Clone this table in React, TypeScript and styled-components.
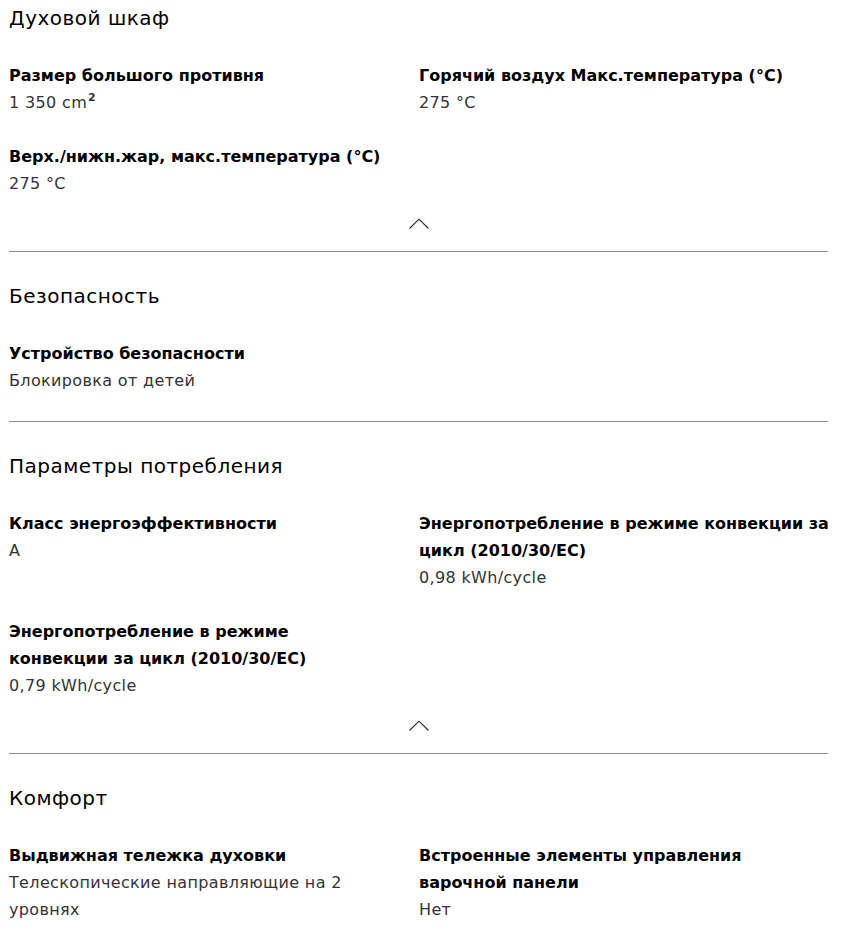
import React from "react";
import styled, { createGlobalStyle } from "styled-components";

const Global = createGlobalStyle`
  html, body { margin: 0; padding: 0; background: #fff; }
  body { font-family: "DejaVu Sans", "Liberation Sans", sans-serif; color: #000; }
`;

const Page = styled.div`
  padding: 3px 15px 0 9px;
`;

const Section = styled.section<{ $last?: boolean; $first?: boolean }>`
  border-bottom: ${(p) => (p.$last ? "none" : "1px solid #8c8c8c")};
  padding-top: ${(p) => (p.$first ? 0 : 29)}px;
`;

const Heading = styled.h2`
  margin: 0;
  font-size: 20px;
  line-height: 30px;
  font-weight: 400;
  letter-spacing: 0.5px;
  color: #000;
`;

const Grid = styled.div<{ $pad: boolean }>`
  display: grid;
  grid-template-columns: 410px 1fr;
  row-gap: 27px;
  margin-right: -6px;
  padding-top: 29px;
  padding-bottom: ${(p) => (p.$pad ? 27 : 0)}px;
`;

const Item = styled.div<{ $col: number }>`
  padding-right: ${(p) => (p.$col === 0 ? 28 : 0)}px;
`;

const Label = styled.div`
  font-size: 16px;
  line-height: 27px;
  font-weight: 700;
  color: #000;
`;

const Value = styled.div`
  font-size: 16px;
  line-height: 27px;
  letter-spacing: 0.35px;
  color: #333;
`;

const Sup = styled.sup`
  font-size: 11px;
  font-weight: 700;
  line-height: 0;
  vertical-align: 7px;
  margin-left: 1px;
`;

const ToggleRow = styled.div`
  height: 54px;
  display: flex;
  justify-content: center;
  align-items: flex-start;
`;

const Toggle = styled.button`
  border: 0;
  background: none;
  padding: 0;
  margin-top: 21px;
  width: 20px;
  height: 11px;
  cursor: pointer;
  display: flex;
  color: #222;
`;

type Entry = { label: string; value: React.ReactNode };
type Sec = { title: string; items: Entry[]; toggle?: boolean };

const sections: Sec[] = [
  {
    title: "Духовой шкаф",
    toggle: true,
    items: [
      {
        label: "Размер большого противня",
        value: (
          <>
            1 350 cm<Sup>2</Sup>
          </>
        ),
      },
      { label: "Горячий воздух Макс.температура (°C)", value: "275 °C" },
      { label: "Верх./нижн.жар, макс.температура (°C)", value: "275 °C" },
    ],
  },
  {
    title: "Безопасность",
    items: [{ label: "Устройство безопасности", value: "Блокировка от детей" }],
  },
  {
    title: "Параметры потребления",
    toggle: true,
    items: [
      { label: "Класс энергоэффективности", value: "A" },
      {
        label: "Энергопотребление в режиме конвекции за цикл (2010/30/EC)",
        value: "0,98 kWh/cycle",
      },
      {
        label: "Энергопотребление в режиме конвекции за цикл (2010/30/EC)",
        value: "0,79 kWh/cycle",
      },
    ],
  },
  {
    title: "Комфорт",
    items: [
      {
        label: "Выдвижная тележка духовки",
        value: "Телескопические направляющие на 2 уровнях",
      },
      {
        label: "Встроенные элементы управления варочной\u00A0панели",
        value: "Нет",
      },
    ],
  },
];

const Chevron = () => (
  <svg width="20" height="11" viewBox="0 0 20 11" fill="none">
    <path d="M0.5 10.5 L10 1.2 L19.5 10.5" stroke="currentColor" strokeWidth="1.1" />
  </svg>
);

export default function App() {
  return (
    <>
      <Global />
      <Page>
        {sections.map((s, i) => (
          <Section key={i} $first={i === 0} $last={i === sections.length - 1}>
            <Heading>{s.title}</Heading>
            <Grid $pad={!s.toggle}>
              {s.items.map((it, j) => (
                <Item key={j} $col={j % 2}>
                  <Label>{it.label}</Label>
                  <Value>{it.value}</Value>
                </Item>
              ))}
            </Grid>
            {s.toggle && (
              <ToggleRow>
                <Toggle aria-label="Свернуть">
                  <Chevron />
                </Toggle>
              </ToggleRow>
            )}
          </Section>
        ))}
      </Page>
    </>
  );
}
